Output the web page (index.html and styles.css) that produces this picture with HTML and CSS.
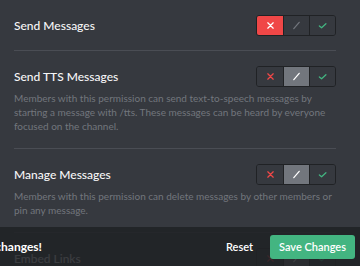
FILE: index.html
```html
<!DOCTYPE html>
<html lang="en">
  <head>
    <meta charset="UTF-8" />
    <meta name="viewport" content="width=device-width, initial-scale=1.0" />
    <title>Permissions</title>
    <link rel="stylesheet" href="styles.css">
  </head>
  <body>
    <div class="permissions">
      <div class="perm">
        <div class="perm-head">
          <span class="perm-title">Send Messages</span>
          <div class="tri">
            <button class="tri-cell deny active"><svg viewBox="0 0 10 10"><path d="M2 2L8 8M8 2L2 8" /></svg></button>
            <button class="tri-cell pass"><svg viewBox="0 0 10 10"><path d="M2 8.5L8 1.5" /></svg></button>
            <button class="tri-cell allow"><svg viewBox="0 0 10 10"><path d="M1.5 5.5L4 7.5L8.8 3" /></svg></button>
          </div>
        </div>
      </div>

      <div class="perm">
        <div class="perm-head">
          <span class="perm-title">Send TTS Messages</span>
          <div class="tri">
            <button class="tri-cell deny"><svg viewBox="0 0 10 10"><path d="M2 2L8 8M8 2L2 8" /></svg></button>
            <button class="tri-cell pass active"><svg viewBox="0 0 10 10"><path d="M2 8.5L8 1.5" /></svg></button>
            <button class="tri-cell allow"><svg viewBox="0 0 10 10"><path d="M1.5 5.5L4 7.5L8.8 3" /></svg></button>
          </div>
        </div>
        <p class="perm-desc">Members with this permission can send text-to-speech messages by starting a message with /tts. These messages can be heard by everyone focused on the channel.</p>
      </div>

      <div class="perm">
        <div class="perm-head">
          <span class="perm-title">Manage Messages</span>
          <div class="tri">
            <button class="tri-cell deny"><svg viewBox="0 0 10 10"><path d="M2 2L8 8M8 2L2 8" /></svg></button>
            <button class="tri-cell pass active"><svg viewBox="0 0 10 10"><path d="M2 8.5L8 1.5" /></svg></button>
            <button class="tri-cell allow"><svg viewBox="0 0 10 10"><path d="M1.5 5.5L4 7.5L8.8 3" /></svg></button>
          </div>
        </div>
        <p class="perm-desc">Members with this permission can delete messages by other members or pin any message.</p>
      </div>

      <div class="perm">
        <div class="perm-head">
          <span class="perm-title">Embed Links</span>
          <div class="tri">
            <button class="tri-cell deny"><svg viewBox="0 0 10 10"><path d="M2 2L8 8M8 2L2 8" /></svg></button>
            <button class="tri-cell pass active"><svg viewBox="0 0 10 10"><path d="M2 8.5L8 1.5" /></svg></button>
            <button class="tri-cell allow"><svg viewBox="0 0 10 10"><path d="M1.5 5.5L4 7.5L8.8 3" /></svg></button>
          </div>
        </div>
      </div>
    </div>

    <!-- unsaved changes notice, sits over the list -->
    <div class="save-bar">
      <div class="notice">
        <span>Careful — you have unsaved changes!</span>
      </div>
      <button class="btn btn-reset">Reset</button>
      <button class="btn btn-save">Save Changes</button>
    </div>
  </body>
</html>
```

FILE: styles.css
```css
body {
  font-family: Lato, "Open Sans", sans-serif;
  background-color: #36393f;
  color: #dcddde;
  margin: 0;
  width: 360px;
  height: 266px;
  overflow: hidden;
  position: relative;
}

.permissions {
  padding: 0 24px 0 14px;
}

.perm {
  padding: 15px 0 15px;
  border-bottom: 1px solid #4a4d54;
}

.perm-head {
  display: flex;
  justify-content: space-between;
  align-items: center;
  height: 20px;
}

.perm-title {
  font-size: 12px;
  font-weight: 500;
  color: #f6f6f7;
}

.perm-desc {
  margin: 5px 0 0;
  font-size: 10px;
  line-height: 14px;
  color: #72767d;
}

/* deny / pass / allow switch */
.tri {
  display: flex;
  border: 1px solid #202225;
  border-radius: 3px;
  overflow: hidden;
}

.tri-cell {
  width: 26px;
  height: 19px;
  padding: 0;
  border: none;
  border-left: 1px solid #202225;
  background-color: #36393f;
  display: flex;
  align-items: center;
  justify-content: center;
  cursor: pointer;
}

.tri-cell:first-child {
  border-left: none;
}

.tri-cell svg {
  width: 9px;
  height: 9px;
  fill: none;
  stroke-width: 1.4;
  stroke-linecap: round;
  stroke-linejoin: round;
}

.deny svg { stroke: #f04747; }
.pass svg { stroke: #72767d; }
.allow svg { stroke: #43b581; }

.deny.active {
  background-color: #f04747;
}

.deny.active svg {
  stroke: #fff;
}

.pass.active {
  background-color: #72767d;
}

.pass.active svg {
  stroke: #fff;
}

.save-bar {
  position: absolute;
  left: 0;
  right: 0;
  bottom: 0;
  height: 39px;
  padding-right: 5px;
  display: flex;
  align-items: center;
  background-color: rgba(32, 34, 37, 0.88);
}

.notice {
  flex: 1;
  max-width: 42px;
  overflow: hidden;
  display: flex;
  justify-content: flex-end;
  margin-right: auto;
  white-space: nowrap;
  font-size: 12px;
  font-weight: 700;
  color: #fff;
}

.btn {
  font-family: inherit;
  border: none;
  border-radius: 3px;
  cursor: pointer;
  font-size: 11px;
  font-weight: 600;
  color: #fff;
}

.btn-reset {
  background: none;
  padding: 0 17px 0 0;
}

.btn-save {
  width: 85px;
  height: 24px;
  background-color: #43b581;
}
```
